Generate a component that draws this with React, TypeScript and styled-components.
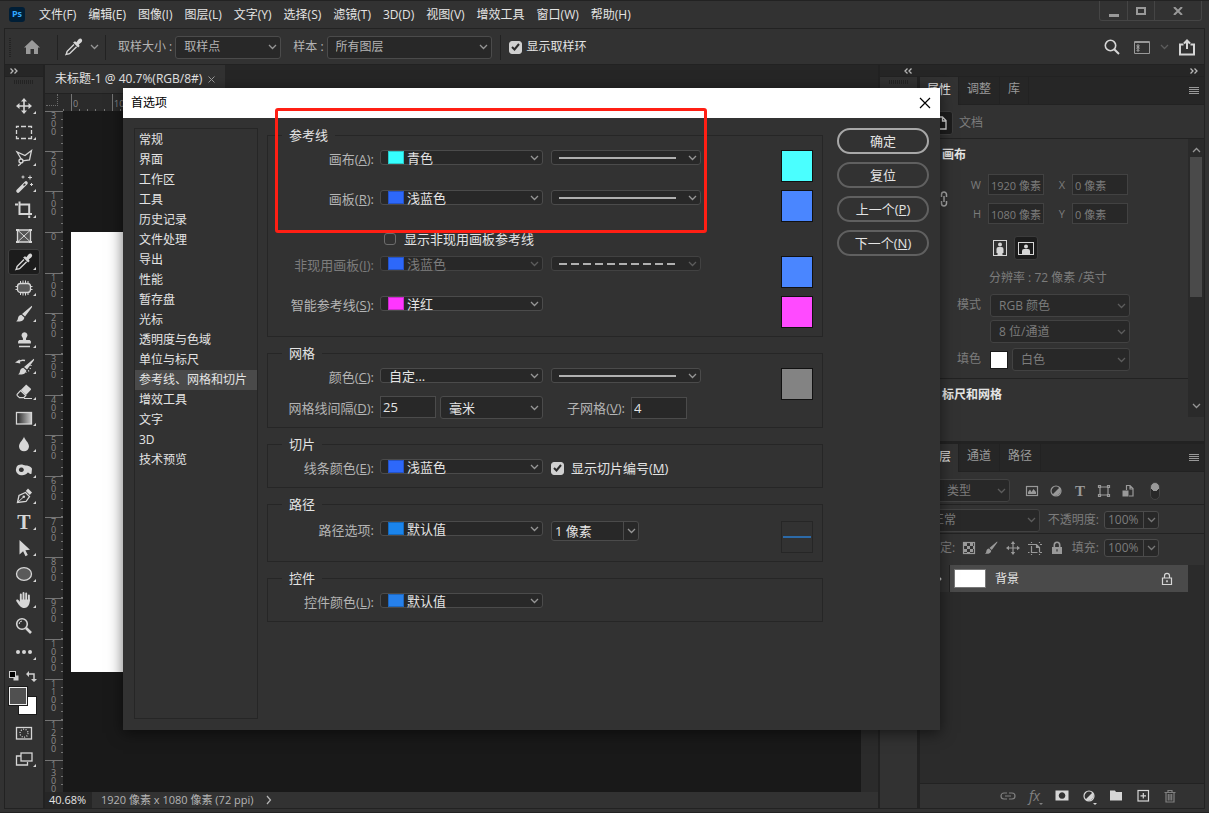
import React from 'react';
import styled, { createGlobalStyle, css } from 'styled-components';

const c = {
  panel: '#323232',
  dark: '#282828',
  header: '#262626',
  line: '#222222',
  edge: '#4b4b4b',
  faint: '#424242',
  text: '#e4e4e4',
  muted: '#b4b4b4',
  dim: '#7c7c7c',
  icon: '#d6d6d6',
};

const Global = createGlobalStyle`
  *, *::before, *::after { box-sizing: border-box; }
  body {
    margin: 0;
    background: ${c.panel};
    color: ${c.text};
    font: 12px/18px "Open Sans", "Noto Sans CJK SC", sans-serif;
  }
  button, input, select { font: inherit; color: inherit; margin: 0; }
  button { padding: 0; border: 0; background: none; }
  svg { display: block; flex: none; }
`;

/* ---------- window frame ---------- */

const Window = styled.div`
  position: relative;
  display: flex;
  flex-direction: column;
  min-height: 100vh;
  padding: 0 4px 3px;
  border-top: 1px solid ${c.line};
  border-bottom: 1px solid ${c.line};
  background: ${c.panel};
  white-space: nowrap;
  overflow: hidden;
`;

const MenuBar = styled.header`
  display: flex;
  align-items: center;
  height: 27px;
  padding-left: 5px;
`;

const Logo = styled.span`
  width: 16px;
  height: 15px;
  margin-right: 14px;
  border-radius: 3px;
  background: #001e36;
  color: #31a8ff;
  font-size: 9px;
  font-weight: 700;
  line-height: 14px;
  text-align: center;
`;

const Menus = styled.nav`
  display: flex;
  flex: 1;
  gap: 12px;
`;

const MenuButton = styled.button`
  line-height: 18px;
`;

const WindowControls = styled.div`
  display: flex;
  align-self: flex-start;
  margin-right: 3px;
  border: 1px solid #454545;
  border-top: 0;
  border-radius: 0 0 3px 3px;
`;

const WindowButton = styled.button<{ $wide?: boolean }>`
  display: grid;
  place-items: center;
  width: ${p => (p.$wide ? 47 : 27)}px;
  height: 19px;
  & + & { border-left: 1px solid #454545; }
`;

const OptionsBar = styled.div`
  display: flex;
  align-items: center;
  height: 37px;
  padding: 1px 2px 0 4px;
  border: 1px solid ${c.line};
  color: ${c.muted};
`;

const Divider = styled.span`
  width: 1px;
  height: 25px;
  background: ${c.line};
`;

const OptionLabel = styled.label`
  margin: 0 3px 0 12px;
`;

const OptionCheck = styled.div`
  margin-left: 8px;
`;

const IconButton = styled.button<{ $w?: number }>`
  display: grid;
  place-items: center;
  width: ${p => p.$w ?? 24}px;
  height: 24px;
  color: ${c.icon};
`;

const Spacer = styled.span<{ $w?: number }>`
  flex: ${p => (p.$w ? `0 0 ${p.$w}px` : '1')};
`;

const Workspace = styled.main`
  display: grid;
  flex: 1;
  grid-template-columns: 38px minmax(0, 1fr) 324px;
  column-gap: 2px;
  border: 1px solid ${c.line};
  border-top: 0;
  background: ${c.line};
`;

/* ---------- form parts ---------- */

const Shell = styled.span<{ $w?: number; $h: number; $off?: boolean }>`
  display: grid;
  grid-template-rows: 100%;
  flex: ${p => (p.$w ? 'none' : '1')};
  ${p => p.$w && css`width: ${p.$w}px;`}
  height: ${p => p.$h}px;
  align-items: center;
  border: 1px solid ${p => (p.$off ? c.faint : c.edge)};
  border-radius: 3px;
  background: ${c.dark};
  > * { grid-area: 1 / 1; }
  > svg { justify-self: end; margin-right: 3px; pointer-events: none; }
`;

/* taller than a slim shell, so that its text is not clipped */
const NativeSelect = styled.select<{ $pad: number }>`
  appearance: none;
  width: 100%;
  height: 22px;
  padding: 0 18px 0 ${p => p.$pad}px;
  border: 0;
  background: transparent;
  &:disabled { opacity: 1; color: ${c.dim}; }
`;

const ColorChip = styled.span<{ $color: string }>`
  width: 16px;
  height: 100%;
  margin-left: 7px;
  border: 1px solid rgba(0, 0, 0, 0.2);
  background: ${p => p.$color};
  pointer-events: none;
`;

const StrokeSample = styled.span<{ $dashed?: boolean }>`
  height: 2px;
  margin: 0 24px 0 7px;
  background: ${p => (p.$dashed ? 'repeating-linear-gradient(90deg, #b0b0b0 0 8px, transparent 8px 12px)' : '#b0b0b0')};
  pointer-events: none;
`;

const Tick = styled.input<{ $size: number }>`
  appearance: none;
  flex: none;
  width: ${p => p.$size}px;
  height: ${p => p.$size}px;
  border: 1px solid #6c6c6c;
  border-radius: 3px;
  &:checked {
    border-color: #d0d0d0;
    background: #d0d0d0;
  }
`;

const TickShell = styled.span`
  display: grid;
  place-items: center;
  > * { grid-area: 1 / 1; }
  > svg { pointer-events: none; }
`;

const TickLabel = styled.label<{ $gap: number }>`
  display: flex;
  align-items: center;
  gap: ${p => p.$gap}px;
  color: ${c.text};
`;

const Chevron = ({ color = '#969696' }: { color?: string }) => (
  <svg width="9" height="6" viewBox="0 0 9 6" fill="none" stroke={color} strokeWidth="1.3">
    <path d="M1 1l3.500 3.500L8 1" />
  </svg>
);

type SelectProps = {
  id?: string; name?: string; value: string; w?: number; h?: number; pad?: number;
  disabled?: boolean; chip?: string; stroke?: 'solid' | 'dashed';
};

function Select({ id, name, value, w, h = 23, pad = 8, disabled, chip, stroke }: SelectProps) {
  return (
    <Shell $w={w} $h={h} $off={disabled}>
      <NativeSelect id={id} aria-label={name} $pad={chip ? 26 : pad} disabled={disabled}>
        <option>{value}</option>
      </NativeSelect>
      {chip && <ColorChip $color={chip} />}
      {stroke && <StrokeSample $dashed={stroke === 'dashed'} />}
      <Chevron color={disabled ? '#5c5c5c' : undefined} />
    </Shell>
  );
}

function Check({ label, checked, size = 13, gap = 6 }: { label: React.ReactNode; checked?: boolean; size?: number; gap?: number }) {
  return (
    <TickLabel $gap={gap}>
      <TickShell>
        <Tick type="checkbox" defaultChecked={checked} $size={size} />
        {checked && (
          <svg width="9" height="8" viewBox="0 0 9 8" fill="none" stroke="#2a2a2a" strokeWidth="2">
            <path d="M1 4l2.500 2.500L8 1" />
          </svg>
        )}
      </TickShell>
      <span>{label}</span>
    </TickLabel>
  );
}

/* ---------- toolbar ---------- */

const Column = styled.section`
  display: flex;
  flex-direction: column;
  min-width: 0;
  background: ${c.panel};
`;

const DockHeader = styled.div`
  display: flex;
  align-items: center;
  justify-content: space-between;
  height: 12px;
  padding: 0 6px 0 5px;
  border-bottom: 1px solid ${c.line};
  background: ${c.header};
`;

const Grip = styled.span`
  width: 20px;
  height: 4px;
  margin: 3px auto 9px;
  background: repeating-linear-gradient(90deg, #232323 0 1px, transparent 1px 2px);
`;

const BarGrip = styled.span`
  width: 2px;
  height: 19px;
  margin-right: 8px;
  background: repeating-linear-gradient(#232323 0 1px, transparent 1px 2px);
`;

const ToolButton = styled.button<{ $active?: boolean }>`
  align-self: center;
  width: 32px;
  height: 26px;
  color: ${c.icon};
  ${p => p.$active && css`
    border-radius: 3px;
    background: #1c1c1c;
    box-shadow: inset 0 0 0 1px #404040;
  `}
`;

const T = ({ size = 20, y = 16 }: { size?: number; y?: number }) => (
  <text x="9" y={y} textAnchor="middle" fill="currentColor" stroke="none" fontFamily="Liberation Serif, serif" fontWeight="700" fontSize={size}>T</text>
);

const f = { fill: 'currentColor', stroke: 'none' };

const EyedropperShape = () => (
  <>
    <path {...f} d="M10 3.200l1.400 1 2-2.600c1.200-1.400 3-1.200 3.400-.2.7 1 .3 2.200-.6 3l-2.500 2 1 1.600-1.600 1.600-5-5z" />
    <path d="M9 6.500L2.500 13c-1 1-.5 2-1.300 3.400C3 16 3.800 16.200 5 15.200L11.600 8.800" strokeWidth="1.400" />
  </>
);

const BrushShape = () => (
  <>
    <path {...f} d="M16.800.8c.6.5.2 1.200 0 1.600L10 11.500 7 9z" />
    <path {...f} d="M6.300 9.700l3 2.700c0 3-3.800 4.800-8.300 3.800 1.600-.6 1.600-1.500 2-3.200.4-1.800 1.600-3 3.300-3.300z" />
  </>
);

const tools: { name: string; flyout?: boolean; art: React.ReactNode }[] = [
  { name: '移动工具', flyout: true, art: <><path d="M9 3v12M3 9h12" strokeWidth="1.600" /><path {...f} d="M9 1l3 3.500H6zM9 17l3-3.500H6zM1 9l3.500-3v6zM17 9l-3.500-3v6z" /></> },
  { name: '矩形选框工具', flyout: true, art: <path d="M1.500 5V3.500H4M6 3.500h5M13 3.500h3.500V5M16.500 7v4M16.500 13v2.500H13M11 15.500H6M4 15.500H1.500V13M1.500 11V7" strokeWidth="1.300" /> },
  { name: '套索工具', flyout: true, art: <><path d="M7.500 11.800L14.500 11l2-9.500-6.500 5-8-3.500 4.200 7" /><circle cx="6" cy="12" r="2" /><path d="M5.500 13.500c.5 1.500-.5 2.500-2.500 3" /></> },
  { name: '魔棒工具', flyout: true, art: <><path d="M3 16l8-8" strokeWidth="3.600" strokeLinecap="round" /><path d="M8.500 10.500l1.800-1.800" stroke={c.panel} strokeWidth="1.400" /><path d="M8 .5v3M6.500 2h3M15 .5v4M13 2.500h4M16.500 8v3M15 9.500h3" strokeWidth="1" /></> },
  { name: '裁剪工具', flyout: true, art: <path d="M4.500.5V13H17M0 3.500h1.500M5 3.500h9.200v9M14.200 14.500V17M0 3.500h3" strokeWidth="2" /> },
  { name: '图框工具', art: <><path fill="#555" d="M2.500 3h13v12h-13z" /><path d="M2.500 3l13 12M15.500 3l-13 12" strokeWidth="1" /><path {...f} d="M1 2h3v2H1zM14 2h3v2h-3zM1 14h3v2H1zM14 14h3v2h-3z" /></> },
  { name: '吸管工具', flyout: true, art: <EyedropperShape /> },
  { name: '修补工具', flyout: true, art: <><rect x="2.500" y="4.500" width="13" height="9" rx="3" fill="#5a5a5a" /><path d="M5.500 2v3M8 1.500V5M10.500 1.500V5M13 2v3M5.500 13v3M8 13v3.500M10.500 13v3.500M13 13v3M.5 7.500H3M.5 10.500H3M15 7.500h2.500M15 10.500h2.500" strokeWidth="1" /></> },
  { name: '画笔工具', flyout: true, art: <BrushShape /> },
  { name: '仿制图章工具', flyout: true, art: <path {...f} d="M9.500 1.200a3 3 0 0 1 2.200 5c-.8 1-.8 2-.5 2.800h3.500l1.200 1.200v2.300H3.100v-2.300L4.300 9h3.500c.3-.8.3-1.800-.5-2.800a3 3 0 0 1 2.200-5zM4 14.800h11v1.400H4z" /> },
  { name: '历史记录画笔工具', flyout: true, art: <><g transform="translate(2 1)"><BrushShape /></g><path d="M3 5.500C5 3 8 3 10 3.500" strokeWidth="1.500" /><path {...f} d="M0 5.500l4.500-3 .8 4z" /><path d="M16 8c0 3-1.500 6-5 7.500" strokeDasharray="1 2" /></> },
  { name: '橡皮擦工具', flyout: true, art: <><path {...f} d="M10.500 2.200c.5-.5 1-.5 1.500 0l3.700 3.300c.5.5.5 1 0 1.500L11 12 5.800 7z" /><path d="M5.500 7.600l-3.200 3.600c-.5.600-.4 1 0 1.500l2.200 2h4.300l2-2.200z" strokeWidth="1.200" /><path d="M9 15.500h8" strokeWidth="1" /></> },
  { name: '渐变工具', flyout: true, art: <><defs><linearGradient id="ramp"><stop offset="0" stopColor="#222" /><stop offset="1" stopColor="#ccc" /></linearGradient></defs><rect x="1.500" y="3.500" width="15" height="11.500" fill="url(#ramp)" /></> },
  { name: '模糊工具', flyout: true, art: <path {...f} d="M9 1.500c.5 3 5 6 5 10a5 4.800 0 0 1-10 0c0-4 4.500-7 5-10z" /> },
  { name: '减淡工具', flyout: true, art: <path {...f} fillRule="evenodd" d="M1.500 6C3 3.500 6 3 8.500 4c1.500.6 3 .2 5 .9 2 .8 3.200 1.500 3.500 2.900l-.5 5c-1.200.6-2 .2-2.500-.8l-1.200-.5C11 13.600 9 14.600 6 14.200 2.500 13.700.7 11 .9 8.500zM6.300 6.600a2.500 2.200 0 1 0 .1 0z" /> },
  { name: '钢笔工具', flyout: true, art: <><path d="M2.500 15.500L4 8.500l6.500-3 4 4-3.500 5z" /><path d="M2.500 15.500L8 10.500" strokeWidth="1" /><circle cx="8.800" cy="9.800" r="1.300" {...f} /><path {...f} d="M10.800 4L13 1.500l4 4L14.800 8z" /></> },
  { name: '文字工具', flyout: true, art: <T /> },
  { name: '选择工具', flyout: true, art: <path {...f} d="M4.500 1v14.500l3.600-3.300 2.400 5 2.300-1.100-2.400-4.900 4.600-.5z" /> },
  { name: '椭圆工具', flyout: true, art: <ellipse cx="9" cy="9" rx="7.500" ry="6.300" fill="#5a5a5a" /> },
  { name: '抓手工具', flyout: true, art: <><path d="M5.800 9.500V3.500M8.500 8.500V2M11.200 8.500V2.500M13.900 9.500V4.500" strokeWidth="1.900" strokeLinecap="round" /><path {...f} d="M4.900 8.500h10c0 4-1.400 8.500-5.500 8.500-3.600 0-5-2.500-8-6.800C.7 8.800 2.200 8 3.400 9l1.500 1.800z" /></> },
  { name: '缩放工具', art: <><circle cx="7" cy="7" r="5.300" strokeWidth="1.600" /><path d="M4.300 7c0-1.800 1-2.800 2.700-2.900" strokeWidth="1" /><path d="M11 11l5 5" strokeWidth="2.600" /></> },
  { name: '编辑工具栏', flyout: true, art: <><circle {...f} cx="3" cy="9" r="2" /><circle {...f} cx="9" cy="9" r="2" /><circle {...f} cx="15" cy="9" r="2" /></> },
];

const ToolArt = ({ flyout, children }: { flyout?: boolean; children: React.ReactNode }) => (
  <svg width="32" height="26" viewBox="0 0 32 26">
    <g transform="translate(7 4)" fill="none" stroke="currentColor" strokeWidth="1.300">{children}</g>
    {flyout && <path d="M28 18v3h-3z" fill="currentColor" />}
  </svg>
);

const swatchArt = (
  <svg width="32" height="54" viewBox="0 0 32 54">
    <path d="M5.500 9.500h5v5h-5z" fill="#cfcfcf" /><rect x="1.500" y="5.500" width="6" height="6" fill="#000" stroke="#cfcfcf" />
    <path d="M20 8h6v6" fill="none" stroke="#cfcfcf" strokeWidth="1.500" /><path d="M18 8l3-3v6zM26 16l-3-3h6z" fill="#cfcfcf" />
    <rect x="10.500" y="30.500" width="18" height="18" fill="#fff" stroke="#1a1a1a" />
    <rect x="0.500" y="20.500" width="19" height="19" fill="#505050" stroke="#1a1a1a" />
    <rect x="1.500" y="21.500" width="17" height="17" fill="none" stroke="#eee" />
  </svg>
);

const SwatchButton = styled.button`
  align-self: center;
  width: 32px;
  height: 55px;
`;

const Arrows = ({ left }: { left?: boolean }) => (
  <svg width="8" height="6" viewBox="0 0 8 6" fill="none" stroke="#b8b8b8" strokeWidth="1.300">
    <path d={left ? 'M3.500.5L1 3l2.500 2.500M7.500.5L5 3l2.500 2.500' : 'M.5.5L3 3 .5 5.500M4.500.5L7 3 4.500 5.500'} />
  </svg>
);

function Toolbar() {
  return (
    <Column aria-label="工具">
      <DockHeader><Arrows /></DockHeader>
      <Grip />
      {tools.map(t => (
        <ToolButton key={t.name} aria-label={t.name} $active={t.name === '吸管工具'}>
          <ToolArt flyout={t.flyout}>{t.art}</ToolArt>
        </ToolButton>
      ))}
      <SwatchButton aria-label="前景色和背景色">{swatchArt}</SwatchButton>
      <ToolButton aria-label="快速蒙版">
        <ToolArt><rect x="1.500" y="3.500" width="15" height="11.500" /><circle cx="9" cy="9.200" r="4" strokeDasharray="1 1.500" /></ToolArt>
      </ToolButton>
      <ToolButton aria-label="屏幕模式">
        <ToolArt flyout><path d="M6 6H1.500v9h11v-3" /><rect x="6" y="3" width="11" height="8" /></ToolArt>
      </ToolButton>
    </Column>
  );
}

/* ---------- document ---------- */

const TabStrip = styled.div`
  display: flex;
  height: 29px;
  background: ${c.header};
  border-bottom: 1px solid ${c.line};
`;

const DocTab = styled.div`
  display: flex;
  align-items: center;
  gap: 6px;
  padding: 0 10px;
  background: ${c.panel};
`;

const DocBody = styled.div`
  display: grid;
  flex: 1;
  grid-template: 17px minmax(0, 1fr) / 18px minmax(0, 1fr) 17px;
  background: #2b2b2b;
  overflow: hidden;
`;

const Corner = styled.span`
  margin: 0 5px 5px 1px;
  border-right: 1px dotted #6c6c6c;
  border-bottom: 1px dotted #6c6c6c;
`;

const RulerTop = styled.div`
  grid-column: 2 / 4;
  overflow: hidden;
`;

const RulerLeft = styled.div`
  height: 0;
  min-height: 100%;
  overflow: hidden;
`;

const RulerStep = styled.div<{ $h: number }>`
  height: ${p => p.$h}px;
  padding-left: 6px;
  border-top: 1px solid #747474;
  background: repeating-linear-gradient(transparent 0 7px, #747474 7px 8px) right / 2px 100% no-repeat;
`;

const RulerDigits = styled.span`
  display: block;
  width: 6px;
  color: #8c8c8c;
  font-size: 9px;
  line-height: 8px;
  white-space: normal;
  word-break: break-all;
`;

const Canvas = styled.div`
  padding: 121px 8px 0 8px;
  background: #191919;
  overflow: hidden;
`;

const Artboard = styled.div`
  height: 440px;
  background: #fff;
`;

const StatusBar = styled.footer`
  display: flex;
  align-items: center;
  height: 16px;
  line-height: 16px;
  font-size: 11px;
  color: ${c.muted};
`;

const ZoomLevel = styled.span`
  width: 47px;
  padding-left: 4px;
  background: ${c.header};
  color: ${c.text};
`;

const DocInfo = styled.span`
  padding: 0 12px 0 9px;
`;

const at = (n: number) => Math.round(n * 40.65);

function HorizontalRuler() {
  return (
    <svg width="100%" height="17" fill="#8c8c8c" fontSize="9" fontFamily="Open Sans, sans-serif">
      {Array.from({ length: 20 }, (_, i) => {
        const x = at(i) + 8;
        return (
          <g key={i}>
            <path d={`M${x}.5 0v17`} stroke="#747474" />
            {[-8, 8, 16, 24].map(d => <path key={d} d={`M${x + d}.5 15v2`} stroke="#747474" />)}
            <text x={x + 2} y="13">{i * 100}</text>
          </g>
        );
      })}
    </svg>
  );
}

function Document() {
  return (
    <Column>
      <TabStrip>
        <DocTab>
          <span>未标题-1 @ 40.7%(RGB/8#)</span>
          <button aria-label="关闭文档">
            <svg width="7" height="7" viewBox="0 0 7 7" stroke="#999" strokeWidth="1"><path d="M.5.5l6 6M6.500.5l-6 6" /></svg>
          </button>
        </DocTab>
      </TabStrip>
      <DocBody>
        <Corner />
        <RulerTop><HorizontalRuler /></RulerTop>
        <RulerLeft>
          {Array.from({ length: 17 }, (_, i) => (
            <RulerStep key={i} $h={i === 0 ? 40 : at(i - 2) - at(i - 3)}>
              <RulerDigits>{Math.abs(i - 3) * 100}</RulerDigits>
            </RulerStep>
          ))}
        </RulerLeft>
        <Canvas><Artboard /></Canvas>
      </DocBody>
      <StatusBar>
        <ZoomLevel>40.68%</ZoomLevel>
        <DocInfo>1920 像素 x 1080 像素 (72 ppi)</DocInfo>
        <svg width="6" height="10" viewBox="0 0 6 10" fill="none" stroke="#b8b8b8" strokeWidth="1.200"><path d="M1 1l3.500 4L1 9" /></svg>
      </StatusBar>
    </Column>
  );
}

/* ---------- right dock ---------- */

const Dock = styled.aside`
  display: grid;
  grid-template: 12px minmax(0, 1fr) / 37px minmax(0, 1fr);
  column-gap: 3px;
  background: ${c.line};
`;

const DockTop = styled(DockHeader)`
  grid-column: 1 / 3;
  padding-left: 24px;
`;

const Panels = styled.div`
  display: flex;
  flex-direction: column;
  gap: 3px;
  min-width: 0;
`;

const Panel = styled.section<{ $grow?: boolean }>`
  display: flex;
  flex-direction: column;
  flex: ${p => (p.$grow ? '1' : 'none')};
  background: ${c.panel};
`;

const Tabs = styled.div`
  display: flex;
  align-items: center;
  height: 28px;
  padding-right: 1px;
  background: ${c.header};
  border-bottom: 1px solid ${c.line};
`;

const Tab = styled.button<{ $active?: boolean }>`
  align-self: stretch;
  margin-bottom: ${p => (p.$active ? -1 : 0)}px;
  padding: 0 7px 3px;
  border-right: 1px solid ${c.line};
  background: ${p => (p.$active ? c.panel : 'transparent')};
  color: ${p => (p.$active ? c.text : '#9a9a9a')};
  & + & { padding: 0 8px 3px; }
`;

const MenuGlyph = () => (
  <svg width="10" height="8" viewBox="0 0 10 8" stroke="#999"><path d="M0 .5h10M0 2.500h10M0 4.500h10M0 6.500h10" /></svg>
);

const PropHead = styled.div`
  display: flex;
  align-items: center;
  gap: 6px;
  height: 34px;
  padding: 3px 0 0 9px;
  border-bottom: 1px solid ${c.line};
  color: ${c.dim};
`;

const DarkBox = styled.button`
  display: grid;
  place-items: center;
  width: 24px;
  height: 24px;
  border: 1px solid #3c3c3c;
  border-radius: 3px;
  background: #1c1c1c;
  color: ${c.icon};
`;

const PropBody = styled.div`
  display: flex;
  height: 278px;
  margin-bottom: 24px;
`;

const PropForm = styled.div`
  flex: 1;
  overflow: hidden;
  color: ${c.dim};
`;

const Heading = styled.h3`
  margin: 0;
  padding: 7px 0 5px 22px;
  color: ${c.text};
  font-size: 12px;
  line-height: 18px;
`;

const SizeGrid = styled.div`
  display: grid;
  grid-template-columns: 10px 24px 56px 14px 56px;
  gap: 8px 7px;
  align-items: center;
  padding: 5px 0 0 20px;
  font-size: 11px;
  > label { text-align: right; }
  > svg { grid-row: 1 / 3; }
`;

const Field = styled.input<{ $w?: number; $h: number }>`
  width: ${p => (p.$w ? `${p.$w}px` : '100%')};
  height: ${p => p.$h}px;
  padding: 0 0 0 2px;
  border: 1px solid ${c.edge};
  background: ${c.dark};
  &:disabled { border-color: ${c.faint}; color: ${c.dim}; }
`;

const Orientation = styled.div`
  display: flex;
  align-items: center;
  gap: 7px;
  padding: 12px 0 9px 73px;
`;

const Resolution = styled.p`
  margin: 0 0 7px 69px;
`;

const ModeGrid = styled.div`
  display: grid;
  grid-template-columns: 61px 140px;
  gap: 3px 9px;
  line-height: 22px;
  > label { text-align: right; }
`;

const FillPair = styled.div`
  display: flex;
  grid-column: 2;
  align-items: center;
  gap: 4px;
`;

const FillSwatch = styled.button`
  width: 18px;
  height: 18px;
  border: 1px solid #1a1a1a;
  background: #fff;
`;

const SectionLine = styled.hr`
  margin: 7px 0 0;
  border: 0;
  border-top: 1px solid ${c.line};
`;

const FillGrid = styled(ModeGrid)`
  margin-top: 5px;
`;

const ScrollTrack = styled.div`
  display: flex;
  flex-direction: column;
  align-items: center;
  justify-content: space-between;
  width: 16px;
  padding: 8px 0;
  background: #2a2a2a;
`;

const Thumb = styled.span`
  width: 12px;
  height: 140px;
  margin: 4px 0 auto;
  background: #4a4a4a;
`;

const PortraitArt = () => (
  <svg width="14" height="16" viewBox="0 0 14 16" fill="currentColor"><path fillRule="evenodd" d="M0 0h14v16H0zM1 1v14h12V1z" /><circle cx="7" cy="4.500" r="2" /><path d="M3.500 9a2 2 0 0 1 2-2h3a2 2 0 0 1 2 2v4h-1v2h-5v-2h-1z" /></svg>
);
const LandscapeArt = () => (
  <svg width="16" height="13" viewBox="0 0 16 13" fill="currentColor"><path fillRule="evenodd" d="M0 0h16v13H0zM1 1v11h14V1z" /><circle cx="8" cy="4.500" r="2" /><path d="M4 12V9a2 2 0 0 1 2-2h4a2 2 0 0 1 2 2v3z" /></svg>
);

function Properties() {
  return (
    <Panel>
      <Tabs>
        <Tab $active>属性</Tab><Tab>调整</Tab><Tab>库</Tab><Spacer /><IconButton $w={18} aria-label="面板菜单"><MenuGlyph /></IconButton>
      </Tabs>
      <PropHead>
        <DarkBox aria-label="文档属性">
          <svg width="11" height="14" viewBox="0 0 11 14" fill="none" stroke="currentColor" strokeWidth="1.300"><path d="M1 1h5.500L10 4.500V13H1zM6.500 1v4H10" /></svg>
        </DarkBox>
        文档
      </PropHead>
      <PropBody>
        <PropForm>
          <Heading>画布</Heading>
          <SizeGrid>
            <svg width="8" height="16" viewBox="0 0 8 16" fill="none" stroke="#a8a8a8" strokeWidth="1.500"><path d="M1.500 6V3.500a2.500 2.500 0 0 1 5 0V6M1.500 10v2.500a2.500 2.500 0 0 0 5 0V10M4 5v6" /></svg>
            <label htmlFor="w">W</label><Field id="w" $h={21} disabled defaultValue="1920 像素" />
            <label htmlFor="x">X</label><Field id="x" $h={21} disabled defaultValue="0 像素" />
            <label htmlFor="h">H</label><Field id="h" $h={21} disabled defaultValue="1080 像素" />
            <label htmlFor="y">Y</label><Field id="y" $h={21} disabled defaultValue="0 像素" />
          </SizeGrid>
          <Orientation>
            <IconButton $w={14} aria-label="纵向"><PortraitArt /></IconButton>
            <DarkBox aria-label="横向"><LandscapeArt /></DarkBox>
          </Orientation>
          <Resolution>分辨率 : 72 像素 /英寸</Resolution>
          <ModeGrid>
            <label htmlFor="mode">模式</label>
            <Select id="mode" w={140} disabled value="RGB 颜色" />
            <span />
            <Select name="位深度" w={140} disabled value="8 位/通道" />
          </ModeGrid>
          <FillGrid>
            <label htmlFor="fill">填色</label>
            <FillPair>
              <FillSwatch aria-label="填充颜色" />
              <Select id="fill" disabled value="白色" />
            </FillPair>
          </FillGrid>
          <SectionLine />
          <Heading>标尺和网格</Heading>
        </PropForm>
        <ScrollTrack>
          <svg width="9" height="6" viewBox="0 0 9 6" fill="none" stroke="#969696" strokeWidth="1.300"><path d="M1 5l3.500-3.500L8 5" /></svg>
          <Thumb />
          <Chevron />
        </ScrollTrack>
      </PropBody>
    </Panel>
  );
}

const LayerRow = styled.div<{ $h: number; $top?: number; $bottom?: number; $line?: boolean }>`
  display: flex;
  align-items: center;
  height: ${p => p.$h}px;
  padding: ${p => p.$top ?? 0}px 0 ${p => p.$bottom ?? 0}px 8px;
  border-bottom: ${p => (p.$line ? `1px solid ${c.line}` : '0')};
  color: ${c.dim};
`;

const IconSet = styled.div<{ $gap: number; $left: number }>`
  display: flex;
  align-items: center;
  gap: ${p => p.$gap}px;
  margin-left: ${p => p.$left}px;
`;

const SmallIcon = styled.button`
  width: 14px;
  height: 14px;
  color: #999;
`;

const Toggle = styled.input`
  appearance: none;
  width: 10px;
  height: 18px;
  margin: 0 0 0 15px;
  border: 1px solid #444;
  border-radius: 5px;
  background: radial-gradient(circle at 50% 4px, #999 0 4px, transparent 4px) ${c.dark};
`;

const PercentLabel = styled.label`
  margin-left: auto;
  padding-right: 5px;
`;

const Percent = styled.span<{ $w: number; $h: number; $inset: number }>`
  display: flex;
  width: ${p => p.$w}px;
  height: ${p => p.$h}px;
  margin-right: ${p => p.$inset}px;
  border: 1px solid ${c.edge};
  border-radius: 3px;
  background: ${c.dark};
  input {
    flex: 1;
    min-width: 0;
    padding: 0 0 0 3px;
    border: 0;
    background: none;
  }
  button {
    display: grid;
    place-items: center;
    width: 15px;
    border-left: 1px solid ${c.edge};
  }
`;

const LayerList = styled.div`
  display: flex;
  flex: 1;
  align-items: flex-start;
  padding-right: 16px;
  background: #2b2b2b;
`;

const EyeCell = styled.button`
  display: grid;
  place-items: center;
  width: 30px;
  height: 27px;
  border-right: 1px solid ${c.line};
  background: ${c.panel};
  color: ${c.icon};
`;

const Layer = styled.div`
  display: flex;
  flex: 1;
  align-items: center;
  gap: 9px;
  height: 27px;
  padding: 0 15px 0 4px;
  background: #4a4a4a;
`;

const LayerThumb = styled.span`
  width: 32px;
  height: 19px;
  border: 1px solid #777;
  background: #fff;
`;

const LayerFooter = styled.footer`
  display: flex;
  align-items: center;
  justify-content: flex-end;
  gap: 9px;
  height: 25px;
  padding-right: 25px;
  border-top: 1px solid ${c.line};
`;

const FooterButton = styled.button<{ $dim?: boolean }>`
  width: 18px;
  height: 18px;
  color: ${p => (p.$dim ? '#808080' : c.icon)};
`;

const Ico = ({ size = 14, box = 14, children }: { size?: number; box?: number; children: React.ReactNode }) => (
  <svg width={size} height={size} viewBox={`0 0 ${box} ${box}`} fill="none" stroke="currentColor" strokeWidth="1.200" overflow="visible">{children}</svg>
);

const filters: [string, React.ReactNode][] = [
  ['像素图层', <><rect x="1.500" y="2.500" width="11" height="9" /><path {...f} d="M3 10V8l2-2.500L6.500 8l2-3L11 8v2z" /></>],
  ['调整图层', <><circle cx="7" cy="7" r="5" /><path {...f} d="M10.500 3.500a5 5 0 0 1-7 7z" /></>],
  ['文字图层', <g transform="translate(-2 0)"><T size={15} y={12} /></g>],
  ['形状图层', <path d="M3 3h8v8H3zM1.500 1.500h2v2h-2zM10.500 1.500h2v2h-2zM1.500 10.500h2v2h-2zM10.500 10.500h2v2h-2z" />],
  ['智能对象', <><path d="M5.500 6V1.500H9L12 4.500V12H8M9 1.500V5h3" /><path {...f} d="M1.500 6.500h6v6h-6z" /></>],
];

const locks: [string, React.ReactNode][] = [
  ['锁定透明像素', <><rect x="1.500" y="1.500" width="11" height="11" /><path {...f} d="M2 2h3v3H2zM8 2h3v3H8zM5 5h3v3H5zM2 8h3v3H2zM8 8h3v3H8zM11 5h1v3h-1zM5 11h3v1H5z" /></>],
  ['锁定图像像素', <g transform="scale(.78)"><BrushShape /></g>],
  ['锁定位置', <><path d="M7 2v10M2 7h10" /><path {...f} d="M7 0l2.200 3H4.800zM7 14l2.200-3H4.800zM0 7l3-2.200v4.400zM14 7l-3-2.200v4.400z" /></>],
  ['防止自动嵌套', <path d="M3.500 1v1M0 3.500h8.500l3 3v5M3.500 5v6.500h6M11.500 1v1M12 3.500h2M0 11.500h1.500M3.500 13v1M12 11.500h2M11.500 13v1M8.500 3.500v3h3" />],
  ['全部锁定', <><path {...f} fillRule="evenodd" d="M2 6h10v7H2zM6.400 8.300v2.200h1.200V8.300z" /><path d="M4.300 6V4a2.700 2.700 0 0 1 5.400 0v2" strokeWidth="1.600" /></>],
];

const actions: [string, boolean, React.ReactNode][] = [
  ['链接图层', true, <path d="M8 6H5a3 3 0 0 0 0 6h3M10 6h3a3 3 0 0 1 0 6h-3M6 9h6" />],
  ['图层样式', true, <><text {...f} x="3" y="14" fontSize="14" fontStyle="italic" fontFamily="Open Sans, sans-serif">fx</text><path {...f} d="M13 16h4l-2 2z" /></>],
  ['图层蒙版', false, <path {...f} fillRule="evenodd" d="M2.500 3.500h13v10h-13zM9 5.200a3.300 3.300 0 1 0 .1 0z" />],
  ['调整', false, <><circle cx="9" cy="9" r="5" /><path {...f} d="M12.500 5.500a5 5 0 0 1-7 7z" /><path {...f} d="M13 16h4l-2 2z" /></>],
  ['创建新组', false, <path {...f} d="M3 3.500h5l1 1.500h6v8.500H3z" />],
  ['创建新图层', false, <><rect x="4" y="3.500" width="10.500" height="10.500" /><path d="M9.300 6v5.500M6.500 8.800H12" /></>],
  ['删除图层', true, <path d="M3.500 5.500h11M7 5V3.500h4V5M5 6v9h8V6M7.300 7v6.500M9 7v6.500M10.700 7v6.500" />],
];

function Layers() {
  return (
    <Panel $grow>
      <Tabs>
        <Tab $active>图层</Tab><Tab>通道</Tab><Tab>路径</Tab><Spacer /><IconButton $w={18} aria-label="面板菜单"><MenuGlyph /></IconButton>
      </Tabs>
      <LayerRow $h={33} $top={5} $line>
        <Select name="图层过滤" w={82} pad={18} value="类型" disabled />
        <IconSet $gap={10} $left={15}>
          {filters.map(([name, art]) => <SmallIcon key={name} aria-label={name}><Ico>{art}</Ico></SmallIcon>)}
        </IconSet>
        <Toggle type="checkbox" aria-label="图层过滤开关" />
      </LayerRow>
      <LayerRow $h={29} $top={2} $line>
        <Select name="混合模式" w={112} pad={3} value="正常" disabled />
        <PercentLabel htmlFor="opacity">不透明度:</PercentLabel>
        <Percent $w={55} $h={18} $inset={45}><input id="opacity" defaultValue="100%" /><button aria-label="不透明度滑块"><Chevron color="#777" /></button></Percent>
      </LayerRow>
      <LayerRow $h={31} $bottom={3}>
        <span>锁定:</span>
        <IconSet $gap={8} $left={7}>
          {locks.map(([name, art]) => <SmallIcon key={name} aria-label={name}><Ico>{art}</Ico></SmallIcon>)}
        </IconSet>
        <PercentLabel htmlFor="fillpct">填充:</PercentLabel>
        <Percent $w={55} $h={18} $inset={45}><input id="fillpct" defaultValue="100%" /><button aria-label="填充滑块"><Chevron color="#777" /></button></Percent>
      </LayerRow>
      <LayerList>
        <EyeCell aria-label="图层可见性"><Ico><path d="M1 7c3-4 9-4 12 0-3 4-9 4-12 0z" /><circle {...f} cx="7" cy="7" r="2" /></Ico></EyeCell>
        <Layer>
          <LayerThumb />
          <span>背景</span>
          <Spacer />
          <svg width="12" height="14" viewBox="0 0 12 14" fill="none" stroke={c.icon} strokeWidth="1.200"><path d="M1.500 6h9v6.500h-9zM3.500 6V3.800a2.500 2.500 0 0 1 5 0V6" /><path d="M6 8.200v2" strokeWidth="1.600" /></svg>
        </Layer>
      </LayerList>
      <LayerFooter>
        {actions.map(([name, dim, art]) => <FooterButton key={name} aria-label={name} $dim={dim}><Ico size={18} box={18}>{art}</Ico></FooterButton>)}
      </LayerFooter>
    </Panel>
  );
}

/* ---------- preferences dialog ---------- */

const Dialog = styled.div`
  position: absolute;
  top: 87px;
  left: 123px;
  width: 817px;
  background: ${c.panel};
  box-shadow: 0 3px 14px rgba(0, 0, 0, 0.55);
`;

const TitleBar = styled.div`
  display: flex;
  align-items: center;
  justify-content: space-between;
  height: 30px;
  padding: 0 9px 0 8px;
  background: #fff;
  color: #000;
`;

const DialogBody = styled.div`
  display: grid;
  grid-template-columns: 124px minmax(0, 1fr) 92px;
  padding: 10px 11px 11px;
`;

const Sidebar = styled.nav`
  display: flex;
  flex-direction: column;
  min-height: 591px;
  padding-top: 1px;
  border: 1px solid #262626;
`;

const SideItem = styled.a<{ $active?: boolean }>`
  padding-left: 4px;
  background: ${p => (p.$active ? '#4a4a4a' : 'transparent')};
  color: ${c.text};
  line-height: 20px;
  text-decoration: none;
`;

const Groups = styled.form`
  display: flex;
  flex-direction: column;
  gap: 7px;
  padding: 0 14px 0 9px;
  margin-top: -2px;
  font-size: 13px;
`;

const Group = styled.fieldset<{ $top: number }>`
  min-width: 0;
  margin: 0;
  padding: ${p => p.$top}px 9px 8px 5px;
  border: 1px solid #262626;
`;

const Legend = styled.legend`
  margin-left: 9px;
  padding: 0 7px;
  line-height: 18px;
`;

const Row = styled.div<{ $h: number; $center?: boolean }>`
  display: flex;
  align-items: ${p => (p.$center ? 'center' : 'flex-start')};
  gap: 8px;
  min-height: ${p => p.$h}px;
  & + & { margin-top: 8px; }
`;

const Rows = styled.div`
  flex: 1;
`;

const Pair = styled.span`
  display: flex;
  gap: 4px;
`;

const RowLabel = styled.label<{ $w?: number; $off?: boolean }>`
  width: ${p => p.$w ?? 101}px;
  margin-right: -2px;
  color: ${p => (p.$off ? c.dim : c.muted)};
  text-align: right;
  line-height: 18px;
`;

const Swatch = styled.button<{ $color?: string }>`
  display: grid;
  place-items: center;
  width: 32px;
  height: 32px;
  margin-left: auto;
  border: 1px solid ${p => (p.$color ? '#111' : '#262626')};
  background: ${p => p.$color ?? 'transparent'};
`;

const PathLine = styled.span`
  width: 28px;
  height: 2px;
  background: #2c6aa8;
`;

const CheckRow = styled.div`
  display: flex;
  height: 34px;
  padding-left: 111px;
`;

const Actions = styled.div`
  display: flex;
  flex-direction: column;
  gap: 8px;
`;

const PillButton = styled.button<{ $primary?: boolean }>`
  height: 26px;
  border: 2px solid ${p => (p.$primary ? '#a8a8a8' : '#606060')};
  border-radius: 13px;
  font-size: 13px;
  line-height: 18px;
`;

const Highlight = styled.div`
  position: absolute;
  top: 20px;
  left: 152px;
  width: 432px;
  height: 125px;
  border: 3px solid #ff1f14;
  border-radius: 3px;
  pointer-events: none;
`;

const sections = ['常规', '界面', '工作区', '工具', '历史记录', '文件处理', '导出', '性能', '暂存盘', '光标', '透明度与色域', '单位与标尺', '参考线、网格和切片', '增效工具', '文字', '3D', '技术预览'];

const Key = ({ k }: { k: string }) => <>(<u>{k}</u>)</>;

type GuideProps = { id: string; label: string; k: string; value: string; chip: string; swatch: string; off?: boolean; stroke?: 'solid' | 'dashed' };

function GuideRow({ id, label, k, value, chip, swatch, off, stroke }: GuideProps) {
  return (
    <Row $h={32}>
      <RowLabel htmlFor={id} $off={off}>{label}<Key k={k} />:</RowLabel>
      <Select id={id} w={163} h={15} chip={chip} value={value} disabled={off} />
      {stroke && <Select name={`${label}线条样式`} w={150} h={15} value="" stroke={stroke} disabled={off} />}
      <Swatch type="button" aria-label={`${label}颜色`} $color={swatch} />
    </Row>
  );
}

function Preferences() {
  return (
    <Dialog role="dialog" aria-label="首选项">
      <TitleBar>
        <span>首选项</span>
        <button aria-label="关闭">
          <svg width="12" height="12" viewBox="0 0 12 12" stroke="#000" strokeWidth="1.200"><path d="M1 1l10 10M11 1L1 11" /></svg>
        </button>
      </TitleBar>
      <DialogBody>
        <Sidebar>
          {sections.map(s => <SideItem key={s} href="#" $active={s === '参考线、网格和切片'}>{s}</SideItem>)}
        </Sidebar>
        <Groups>
          <Group $top={6}>
            <Legend>参考线</Legend>
            <GuideRow id="canvas" label="画布" k="A" value="青色" chip="#36ffff" swatch="#4affff" stroke="solid" />
            <GuideRow id="artboard" label="画板" k="R" value="浅蓝色" chip="#2d68fa" swatch="#4a86ff" stroke="solid" />
            <CheckRow><Check size={12} gap={8} label="显示非现用画板参考线" /></CheckRow>
            <GuideRow id="inactive" label="非现用画板" k="I" value="浅蓝色" chip="#2d68fa" swatch="#4a86ff" stroke="dashed" off />
            <GuideRow id="smart" label="智能参考线" k="S" value="洋红" chip="#ff36ff" swatch="#ff4aff" />
          </Group>
          <Group $top={6}>
            <Legend>网格</Legend>
            <Row $h={50}>
              <Rows>
                <Row $h={20}>
                  <RowLabel htmlFor="gridcolor">颜色<Key k="C" />:</RowLabel>
                  <Select id="gridcolor" w={163} h={15} value="自定..." />
                  <Select name="网格线条样式" w={150} h={15} value="" stroke="solid" />
                </Row>
                <Row $h={23} $center>
                  <RowLabel htmlFor="spacing">网格线间隔<Key k="D" />:</RowLabel>
                  <Pair>
                    <Field id="spacing" $w={56} $h={22} defaultValue="25" />
                    <Select name="网格单位" w={103} value="毫米" />
                  </Pair>
                  <RowLabel htmlFor="sub" $w={74}>子网格<Key k="V" />:</RowLabel>
                  <Field id="sub" $w={56} $h={22} defaultValue="4" />
                </Row>
              </Rows>
              <Swatch type="button" aria-label="网格颜色" $color="#838383" />
            </Row>
          </Group>
          <Group $top={6}>
            <Legend>切片</Legend>
            <Row $h={20}>
              <RowLabel htmlFor="slice">线条颜色<Key k="E" />:</RowLabel>
              <Select id="slice" w={163} h={15} chip="#2d68fa" value="浅蓝色" />
              <Check checked gap={7} label={<>显示切片编号<Key k="M" /></>} />
            </Row>
          </Group>
          <Group $top={8}>
            <Legend>路径</Legend>
            <Row $h={32}>
              <RowLabel htmlFor="path">路径选项:</RowLabel>
              <Select id="path" w={163} h={15} chip="#1a84ec" value="默认值" />
              <Percent $w={88} $h={20} $inset={0}><input aria-label="路径粗细" defaultValue="1 像素" /><button type="button" aria-label="路径粗细选项"><Chevron /></button></Percent>
              <Swatch type="button" aria-label="路径预览"><PathLine /></Swatch>
            </Row>
          </Group>
          <Group $top={6}>
            <Legend>控件</Legend>
            <Row $h={20}>
              <RowLabel htmlFor="control">控件颜色<Key k="L" />:</RowLabel>
              <Select id="control" w={163} h={15} chip="#2680eb" value="默认值" />
            </Row>
          </Group>
        </Groups>
        <Actions>
          <PillButton $primary>确定</PillButton>
          <PillButton>复位</PillButton>
          <PillButton>上一个<Key k="P" /></PillButton>
          <PillButton>下一个<Key k="N" /></PillButton>
        </Actions>
      </DialogBody>
      <Highlight />
    </Dialog>
  );
}

/* ---------- application ---------- */

const menus = ['文件(F)', '编辑(E)', '图像(I)', '图层(L)', '文字(Y)', '选择(S)', '滤镜(T)', '3D(D)', '视图(V)', '增效工具', '窗口(W)', '帮助(H)'];

export default function App() {
  return (
    <>
      <Global />
      <Window>
        <MenuBar>
          <Logo>Ps</Logo>
          <Menus>{menus.map(m => <MenuButton key={m}>{m}</MenuButton>)}</Menus>
          <WindowControls>
            <WindowButton aria-label="最小化"><svg width="11" height="12" fill="#999"><path d="M1 9h10v3H1z" /></svg></WindowButton>
            <WindowButton aria-label="最大化"><svg width="10" height="8" fill="none" stroke="#999" strokeWidth="2"><path d="M1 1h8v6H1z" /></svg></WindowButton>
            <WindowButton $wide aria-label="关闭"><svg width="10" height="8" stroke="#999" strokeWidth="2"><path d="M1 0l8 8M9 0L1 8" /></svg></WindowButton>
          </WindowControls>
        </MenuBar>
        <OptionsBar>
          <BarGrip />
          <IconButton $w={26} aria-label="主页"><svg width="16" height="14" viewBox="0 0 16 14" fill="#999"><path d="M8 0l8 7.500h-2V14h-4V9H6.500v5H2V7.500H0z" /></svg></IconButton>
          <Spacer $w={12} />
          <Divider />
          <IconButton $w={32} aria-label="吸管工具"><svg width="18" height="18" viewBox="0 0 18 18" fill="none" stroke="currentColor"><EyedropperShape /></svg></IconButton>
          <IconButton $w={8} aria-label="工具预设"><Chevron /></IconButton>
          <Spacer $w={7} />
          <Divider />
          <OptionLabel htmlFor="sample">取样大小 :</OptionLabel>
          <Select id="sample" w={106} value="取样点" />
          <OptionLabel htmlFor="source">样本 :</OptionLabel>
          <Select id="source" w={165} value="所有图层" />
          <Spacer $w={8} />
          <Divider />
          <OptionCheck><Check checked gap={5} label="显示取样环" /></OptionCheck>
          <Spacer />
          <IconButton $w={32} aria-label="搜索"><svg width="16" height="16" viewBox="0 0 16 16" fill="none" stroke="currentColor" strokeWidth="1.600"><circle cx="6.500" cy="6.500" r="5.200" /><path d="M10.200 10.200l4.800 4.800" strokeWidth="2" /></svg></IconButton>
          <IconButton $w={28} aria-label="工作区"><svg width="16" height="13" viewBox="0 0 16 13" fill="none" stroke="#999"><path d="M.5.5h15v12H.5zM.5 1.500h15M3 4h2v1.500H3zM3 6.500h2V8H3zM3 9h2v1H3z" /></svg></IconButton>
          <IconButton $w={16} aria-label="工作区选项"><Chevron color="#5c5c5c" /></IconButton>
          <IconButton $w={30} aria-label="共享"><svg width="18" height="17" viewBox="0 0 18 17" fill="none" stroke="currentColor" strokeWidth="2"><path d="M5.500 5.500H2v10h14v-10h-3.500M9 10V2M6 4.500l3-3 3 3" /></svg></IconButton>
        </OptionsBar>
        <Workspace>
          <Toolbar />
          <Document />
          <Dock>
            <DockTop><Arrows left /><Arrows /></DockTop>
            <Column><Grip /></Column>
            <Panels>
              <Properties />
              <Layers />
            </Panels>
          </Dock>
        </Workspace>
        <Preferences />
      </Window>
    </>
  );
}
